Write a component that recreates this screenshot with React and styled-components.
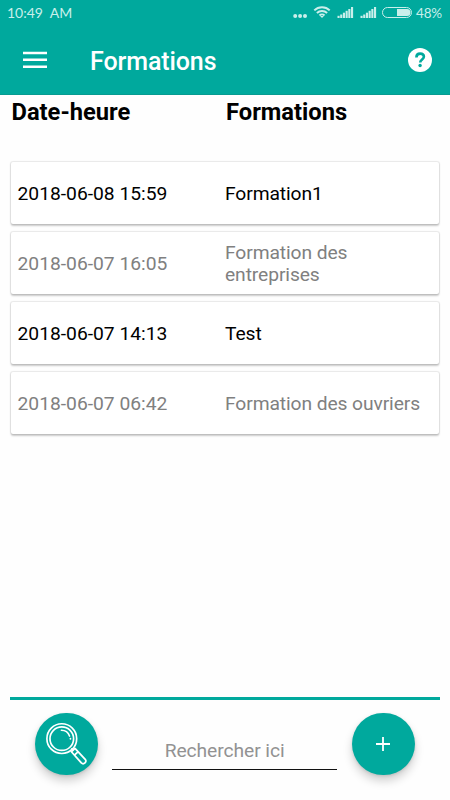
import React from "react";
import styled, { createGlobalStyle } from "styled-components";

const teal = "#00a99d";

const GlobalStyle = createGlobalStyle`
  * { box-sizing: border-box; }
  body { margin: 0; background: #fff; }
`;

const Screen = styled.div`
  width: 450px;
  height: 800px;
  display: flex;
  flex-direction: column;
  background: #fefefe;
  font-family: Roboto, sans-serif;
  overflow: hidden;
`;

const Header = styled.header`
  height: 95px;
  flex: none;
  background: ${teal};
  border-bottom: 1px solid #079b91;
`;

const StatusBar = styled.div`
  height: 26px;
  display: flex;
  align-items: center;
  justify-content: space-between;
  padding: 0 8px 0 7px;
  color: #c9efeb;
  font: 400 14px/26px Lato, sans-serif;
`;

const Clock = styled.span`
  white-space: pre;
`;

const StatusIcons = styled.div`
  display: flex;
  align-items: center;
`;

const Battery = styled.span`
  width: 30px;
  text-align: right;
  white-space: nowrap;
  font-size: 13.5px;
  letter-spacing: -0.2px;
`;

const Toolbar = styled.div`
  height: 68px;
  display: flex;
  align-items: center;
  padding: 0 17px 0 22px;
`;

const IconButton = styled.button`
  display: flex;
  padding: 0;
  border: 0;
  background: none;
`;

const Title = styled.h1`
  flex: 1;
  margin: 3px 0 0 42px;
  color: #fff;
  font-size: 25px;
  font-weight: 500;
  line-height: 30px;
  letter-spacing: -0.1px;
`;

const ColumnHeads = styled.div`
  height: 67px;
  flex: none;
  display: grid;
  grid-template-columns: 214.5px 1fr;
  padding: 3px 0 0 11.5px;
  color: #000;
  font-size: 23.7px;
  font-weight: 700;
  line-height: 28px;
`;

const List = styled.main`
  flex: 1;
  display: flex;
  flex-direction: column;
  gap: 8px;
  padding: 0 11px;
`;

const Card = styled.article`
  height: 62px;
  display: grid;
  grid-template-columns: 207.5px 200px;
  align-items: center;
  padding: 2px 0 0 6.5px;
  border-radius: 2px;
  background: #fff;
  box-shadow: 0 0 1px 1px rgba(0, 0, 0, 0.08), 0 1.5px 2px rgba(0, 0, 0, 0.2);
  color: ${(p) => (p.$muted ? "#808080" : "#000")};
  font-size: 19.25px;
  line-height: 22.5px;
`;

const FormationName = styled.span`
  letter-spacing: -0.1px;
`;

const Footer = styled.footer`
  height: 103px;
  flex: none;
  margin: 0 10px;
  border-top: 3px solid ${teal};
  display: flex;
  align-items: flex-start;
  padding: 12.5px 25px 0;
`;

const RoundButton = styled.button`
  width: 62.5px;
  height: 62.5px;
  flex: none;
  display: flex;
  align-items: center;
  justify-content: center;
  padding: 0;
  border: 0;
  border-radius: 50%;
  background: ${teal};
  box-shadow: 0 6px 10px rgba(0, 0, 0, 0.18), 0 1px 3px rgba(0, 0, 0, 0.12);
`;

const SearchField = styled.input`
  width: 225px;
  height: 37px;
  margin: 20.5px 15px 0 14.6px;
  padding: 0 0 1px;
  border: 0;
  border-bottom: 1px solid #111;
  outline: 0;
  background: none;
  text-align: center;
  font: 400 19.25px/36px Roboto, sans-serif;
  letter-spacing: -0.08px;
  &::placeholder { color: #929292; opacity: 1; }
`;

const rows = [
  { date: "2018-06-08 15:59", name: "Formation1" },
  { date: "2018-06-07 16:05", name: "Formation des entreprises", muted: true },
  { date: "2018-06-07 14:13", name: "Test" },
  { date: "2018-06-07 06:42", name: "Formation des ouvriers", muted: true },
];

const signalBars = [
  [0, 8.8], [3, 7.5], [6, 5.7], [9, 3.8], [12, 2], [15, 0],
];

function StatusGlyphs() {
  return (
    <svg width="120" height="14" viewBox="292 6 120 14" fill="#c9efeb">
      <circle cx="295.2" cy="16" r="2" />
      <circle cx="300.1" cy="16" r="2" />
      <circle cx="305" cy="16" r="2" />
      <g fill="none" stroke="#c9efeb" strokeWidth="2">
        <path d="M314.3 10.4a10.9 10.9 0 0 1 15.4 0" />
        <path d="M316.9 13a7.2 7.2 0 0 1 10.2 0" />
        <path d="M319.5 15.5a3.6 3.6 0 0 1 5 0" />
      </g>
      <path d="M320.1 16h3.8L322 18.1z" />
      {[337.5, 360.5].map((x) => (
        <g key={x}>
          {signalBars.map(([dx, top]) => (
            <rect key={dx} x={x + dx * 0.9} y={7 + top} width="2.1" height={11 - top} />
          ))}
        </g>
      ))}
      <rect x="382.5" y="7.5" width="29" height="10" rx="5" fill="none" stroke="#c9efeb" />
      <path d="M397 9h10a3.5 3.5 0 0 1 0 7h-10z" />
    </svg>
  );
}

function MenuIcon() {
  return (
    <svg width="26" height="20" viewBox="0 0 26 20" fill="#fff">
      <path d="M1 1.7h24v2.6H1zM1 8.5h24v2.6H1zM1 15.4h24v2.6H1z" />
    </svg>
  );
}

function HelpIcon() {
  return (
    <svg width="26" height="26" viewBox="0 0 26 26">
      <circle cx="13" cy="13" r="12" fill="#fff" />
      <path d="M9.4 10.4c0-2.4 1.5-3.8 3.7-3.8s3.8 1.3 3.8 3.2c0 2.6-3.7 2.8-3.7 5.7" fill="none" stroke={teal} strokeWidth="2.6" />
      <circle cx="13.1" cy="18.5" r="1.7" fill={teal} />
    </svg>
  );
}

function MagnifierIcon() {
  return (
    <svg width="63" height="63" viewBox="0 0 63 63" fill="none" stroke="#fff">
      <circle cx="27" cy="26.6" r="15" strokeWidth="1.7" />
      <circle cx="27" cy="26.6" r="11.9" strokeWidth="1.7" />
      <path d="M26.6 18.2a8.7 8.7 0 0 1 8.2 5.8" strokeWidth="1.6" strokeLinecap="round" />
      <circle cx="35.7" cy="26.7" r=".9" fill="#fff" stroke="none" />
      <path d="M36.7 39.8l3.6-3.3 10.3 10.9a2.7 2.7 0 0 1-3.9 3.7z" strokeWidth="1.8" strokeLinejoin="round" />
      <path d="M36.6 36.4l2 2M39.7 43.2l3.9-3.6" strokeWidth="1.8" />
    </svg>
  );
}

function PlusIcon() {
  return (
    <svg width="16" height="16" viewBox="0 0 16 16" fill="none" stroke="#fff" strokeWidth="1.8">
      <path d="M8 1v14M1 8h14" />
    </svg>
  );
}

export default function App() {
  return (
    <Screen>
      <GlobalStyle />
      <Header>
        <StatusBar>
          <Clock>{"10:49  AM"}</Clock>
          <StatusIcons>
            <StatusGlyphs />
            <Battery>48%</Battery>
          </StatusIcons>
        </StatusBar>
        <Toolbar>
          <IconButton aria-label="Menu"><MenuIcon /></IconButton>
          <Title>Formations</Title>
          <IconButton aria-label="Aide"><HelpIcon /></IconButton>
        </Toolbar>
      </Header>
      <ColumnHeads>
        <span>Date-heure</span>
        <span>Formations</span>
      </ColumnHeads>
      <List>
        {rows.map((row) => (
          <Card key={row.date} $muted={row.muted}>
            <span>{row.date}</span>
            <FormationName>{row.name}</FormationName>
          </Card>
        ))}
      </List>
      <Footer>
        <RoundButton aria-label="Rechercher"><MagnifierIcon /></RoundButton>
        <SearchField placeholder="Rechercher ici" />
        <RoundButton aria-label="Ajouter"><PlusIcon /></RoundButton>
      </Footer>
    </Screen>
  );
}
